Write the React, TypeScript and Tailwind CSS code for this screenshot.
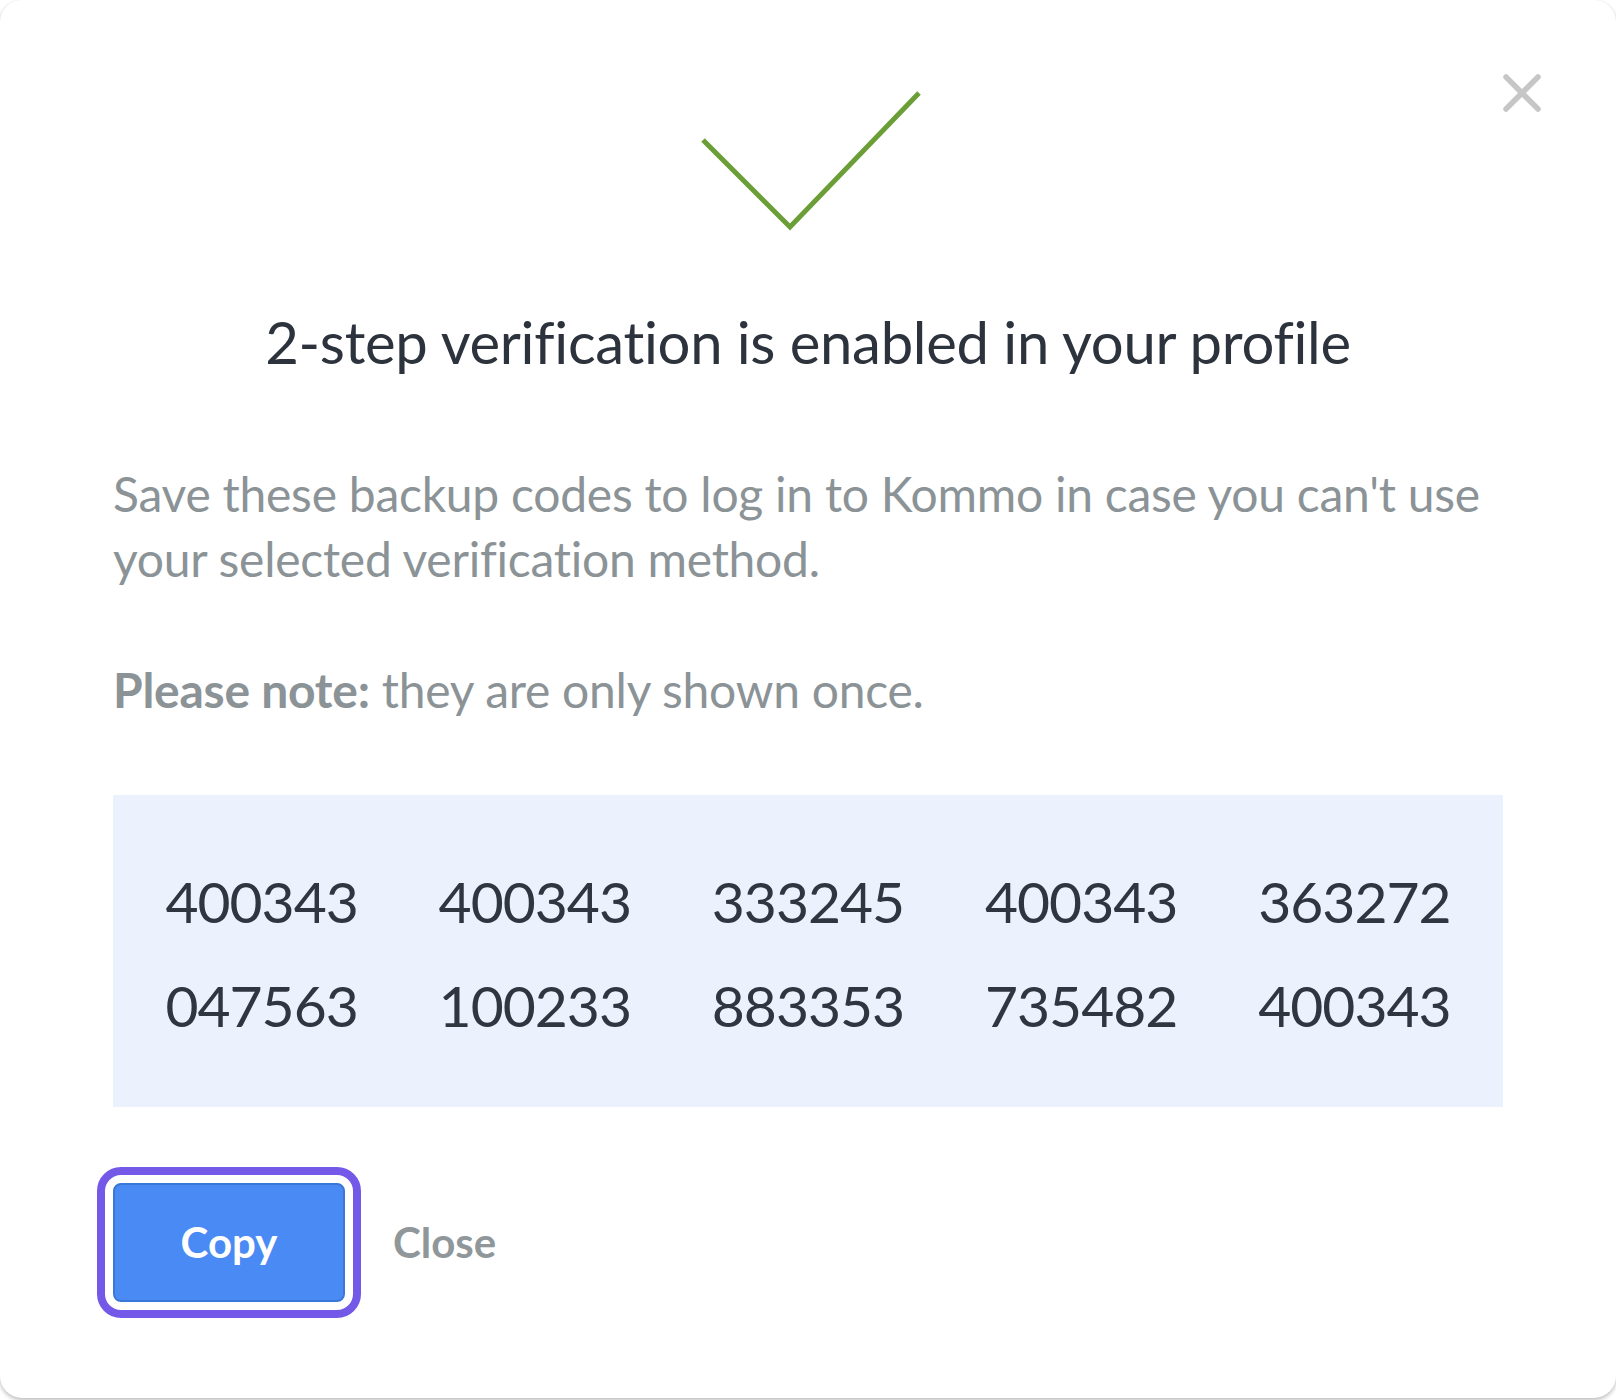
import React from 'react';

const CODES = ['400343', '400343', '333245', '400343', '363272', '047563', '100233', '883353', '735482', '400343'];

const FONT = "font-['Lato','Noto_Sans',sans-serif]";

const BackupCodesModal: React.FC = () => {
  return (
    <div className={`min-h-[1400px] bg-white ${FONT}`}>
      <div className="relative rounded-[22px] bg-white px-[113px] pt-[88px] pb-[96px] shadow-[0_2px_4px_rgba(0,0,0,0.28)]">
        {/* close */}
        <button className="absolute right-[75px] top-[74px] h-[38px] w-[38px]">
          <svg viewBox="0 0 38 38" className="h-full w-full">
            <path d="M3 3 L35 35 M35 3 L3 35" stroke="#c6c6c6" strokeWidth="5.5" strokeLinecap="round" fill="none" />
          </svg>
        </button>

        {/* check mark */}
        <div className="flex justify-center">
          <svg width="222" height="144" viewBox="0 0 222 144" className="translate-x-[3px]">
            <path d="M3 52 L90 139 L219 5" stroke="#6c9e38" strokeWidth="5" fill="none" />
          </svg>
        </div>

        <h1 className="mt-[73px] text-center text-[58px] leading-[74px] font-normal tracking-[-0.3px] text-[#2d333c]">
          2-step verification is enabled in your profile
        </h1>

        <p className="mt-[82px] text-[48px] leading-[65px] tracking-[-0.25px] text-[#8b9397]">
          Save these backup codes to log in to Kommo in case you can't use your selected verification method.
        </p>

        <p className="mt-[66px] text-[48px] leading-[65px] tracking-[-0.25px] text-[#8b9397]">
          <span className="font-bold">Please note:</span> they are only shown once.
        </p>

        <div className="mt-[73px] bg-[#ebf2fd] px-[12px] pt-[54px] pb-[50px]">
          <div className="grid grid-cols-5 text-center text-[57px] leading-[104px] tracking-[-1px] text-[#2f3640]">
            {CODES.map((code, i) => (
              <span key={i}>{code}</span>
            ))}
          </div>
        </div>

        <div className="mt-[76px] flex items-center gap-[48px]">
          <button className="h-[119px] w-[232px] rounded-[8px] border-2 border-[#3b77d6] bg-[#4a8af4] text-[42px] font-bold text-white outline-8 outline-offset-8 outline-[#7459e8] outline-solid">
            Copy
          </button>
          <button className="text-[42px] font-bold text-[#8f979a]">Close</button>
        </div>
      </div>
    </div>
  );
};

export default function App() {
  return <BackupCodesModal />;
}
